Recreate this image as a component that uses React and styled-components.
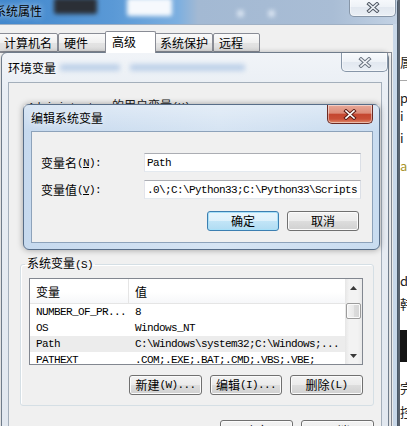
import React from 'react';
import styled, { createGlobalStyle } from 'styled-components';

const CJK = '"Noto Sans CJK SC", "Liberation Sans", sans-serif';
const MONO = '"Liberation Mono", "Noto Sans CJK SC", monospace';

const GlobalStyle = createGlobalStyle`
  * { box-sizing: border-box; }
  html, body { margin: 0; padding: 0; background: #fff; }
  body { font-family: ${CJK}; font-size: 12px; color: #000; }
`;

const Screen = styled.div`
  position: relative;
  width: 407px;
  height: 426px;
  overflow: hidden;
  background: #fff;
`;

/* the page lying behind everything, only a sliver shows on the right */
const BackPage = styled.div`
  position: absolute;
  left: 398px;
  top: 0;
  width: 30px;
  height: 426px;
  display: flex;
  flex-direction: column;
  padding-top: 54px;
  background: #fff;
  border-left: 2px solid #5b6470;
`;

const BackGlyph = styled.span`
  margin-top: ${(p) => p.$gap}px;
  margin-left: 0;
  height: 16px;
  font-size: 13px;
  line-height: 16px;
  color: ${(p) => p.$color || '#222'};
`;

const BackRule = styled.div`
  margin-top: ${(p) => p.$gap}px;
  height: ${(p) => p.$h || 1}px;
  background: ${(p) => p.$color || '#a9a9a9'};
`;

/* ---------- windows ---------- */

const SysWindow = styled.div`
  position: absolute;
  left: -8px;
  top: -5px;
  width: 406px;
  height: 460px;
  display: flex;
  flex-direction: column;
  background: #c9d8e9;
  border: 1px solid #4a5868;
  border-radius: 7px 7px 0 0;
`;

const SysTitleBar = styled.div`
  display: flex;
  align-items: center;
  height: 28px;
  padding: 2px 0 0 1px;
  background: linear-gradient(90deg, #3f86cc 0px, #5a99d6 120px, #7cafe0 185px, #a3b9d3 205px, #a9bdd5 340px, #c3d2e4 100%);
`;

const EnvTitleBar = styled.div`
  display: flex;
  align-items: center;
  height: 29px;
  padding-left: 6px;
`;

const EditTitleBar = styled.div`
  display: flex;
  align-items: center;
  height: 26px;
  padding-left: 7px;
  background: linear-gradient(180deg, rgba(255, 255, 255, 0.35) 0%, rgba(255, 255, 255, 0) 100%);
`;

const TitleText = styled.span`
  font-family: ${CJK};
  font-size: 12px;
  line-height: 16px;
  color: #000;
  white-space: nowrap;
  text-shadow: 0 0 6px rgba(255, 255, 255, 0.9);
`;

const Blob = styled.span`
  align-self: flex-start;
  flex: none;
  margin-left: ${(p) => p.$ml}px;
  margin-top: ${(p) => p.$mt || 0}px;
  width: ${(p) => p.$w}px;
  height: ${(p) => p.$h}px;
  border-radius: 2px;
  background: ${(p) => p.$color};
  opacity: ${(p) => p.$o || 1};
  filter: blur(${(p) => p.$blur || 2}px);
`;

const Spacer = styled.div`
  flex: 1;
`;

const CloseButton = styled.div`
  align-self: flex-start;
  flex: none;
  width: ${(p) => p.$w || 47}px;
  height: 19px;
  margin-right: ${(p) => p.$mr || 0}px;
  display: flex;
  align-items: center;
  justify-content: center;
  border: 1px solid ${(p) => (p.$red ? '#6b2b24' : '#8796a8')};
  border-top: none;
  border-radius: 0 0 5px 5px;
  background: ${(p) =>
    p.$red
      ? 'linear-gradient(180deg, #e8a898 0%, #dc8b78 45%, #c4462f 52%, #c94f37 78%, #e08c6c 100%)'
      : 'linear-gradient(180deg, #f8fafd 0%, #eef2f7 48%, #e2e8f0 52%, #eaeff5 100%)'};
  box-shadow: inset 0 0 0 1px rgba(255, 255, 255, 0.45);
`;

const XGlyph = ({ outline, fill }) => (
  <svg width="14" height="11" viewBox="0 0 14 11">
    <g strokeLinecap="square">
      <path d="M3 2 L11 9 M11 2 L3 9" stroke={outline} strokeWidth="3.6" />
      <path d="M3 2 L11 9 M11 2 L3 9" stroke={fill} strokeWidth="1.6" />
    </g>
  </svg>
);

const SysClient = styled.div`
  flex: 1;
  display: flex;
  flex-direction: column;
  margin: 0 4px 0 3px;
  padding-top: 6px;
  background: #f0f0f0;
  border-top: 1px solid #9fb0c4;
`;

const TabStrip = styled.div`
  display: flex;
  align-items: flex-end;
  height: 21px;
  padding-left: 2px;
`;

const Tab = styled.div`
  position: relative;
  z-index: ${(p) => (p.$active ? 1 : 0)};
  width: ${(p) => p.$w}px;
  height: ${(p) => (p.$active ? 22 : 19)}px;
  margin: 0 ${(p) => (p.$active ? -2 : 0)}px ${(p) => (p.$active ? -1 : 0)}px;
  padding: ${(p) => (p.$active ? '1px 0 0 6px' : '0 0 0 5px')};
  border: 1px solid #898c95;
  border-bottom: ${(p) => (p.$active ? 'none' : '1px solid #898c95')};
  border-radius: 2px 2px 0 0;
  background: ${(p) =>
    p.$active ? '#fff' : 'linear-gradient(180deg, #fafafa 0%, #f0f0f0 50%, #e4e4e4 51%, #dcdcdc 100%)'};
  font-size: 12px;
  line-height: 17px;
  white-space: nowrap;
`;

const TabPanel = styled.div`
  flex: 1;
  margin-right: 1px;
  background: #fcfcfc;
  border: 1px solid #898c95;
`;

const EnvWindow = styled.div`
  position: absolute;
  left: 1px;
  top: 52px;
  width: 388px;
  height: 420px;
  display: flex;
  flex-direction: column;
  border: 1px solid #6f7c8b;
  border-radius: 6px 6px 0 0;
  background: linear-gradient(180deg, #f1f4f8 0%, #e9eef4 40px, #e1e7ef 100%);
  box-shadow: 0 0 5px rgba(0, 0, 0, 0.25);
`;

const EnvClient = styled.div`
  flex: 1;
  display: flex;
  flex-direction: column;
  margin: 0 6px;
  padding: 15px 7px 0 0;
  background: #f0f0f0;
  border: 1px solid #a4afbb;
`;

const GroupCaption = styled.div`
  margin-left: 19px;
  height: 14px;
  font-size: 12px;
  line-height: 14px;
  white-space: nowrap;
  color: #222;
`;

const HiddenGroup = styled.div`
  height: 144px;
`;

const GroupBox = styled.fieldset`
  margin: 0 0 0 11px;
  padding: 6px 10px 10px 8px;
  min-width: 0;
  border: 1px solid #d5dfe5;
  border-radius: 3px;
  box-shadow: inset 1px 1px 0 #fff;
`;

const GroupLegend = styled.legend`
  margin-left: -4px;
  padding: 0 2px;
  font-size: 12px;
  line-height: 14px;
`;

const ListView = styled.div`
  display: flex;
  height: 87px;
  border: 1px solid #828790;
  background: #fff;
`;

const ListMain = styled.div`
  flex: 1;
  display: flex;
  flex-direction: column;
  overflow: hidden;
`;

const HeaderRow = styled.div`
  display: grid;
  grid-template-columns: 99px 1fr;
  height: 25px;
  flex: none;
  border-bottom: 1px solid #e5e5e5;
  background: linear-gradient(180deg, #fff 0%, #fff 55%, #f6f7f9 100%);
`;

const HeaderCell = styled.div`
  display: flex;
  align-items: center;
  padding-left: 6px;
  font-size: 12px;
  border-right: ${(p) => (p.$sep ? '1px solid #e5e5e5' : 'none')};
`;

const Row = styled.div`
  display: grid;
  grid-template-columns: 99px 1fr;
  height: 16px;
  flex: none;
  align-items: center;
  background: ${(p) => (p.$selected ? '#ececec' : 'transparent')};
  font-family: ${MONO};
  font-size: 11px;
  letter-spacing: -0.6px;
  line-height: 16px;
  white-space: nowrap;
`;

const Cell = styled.span`
  padding-left: 6px;
  overflow: hidden;
`;

const ScrollBar = styled.div`
  width: 17px;
  flex: none;
  display: flex;
  flex-direction: column;
  align-items: center;
  background: linear-gradient(90deg, #e6e6e6 0%, #f3f3f3 25%, #f3f3f3 75%, #e9e9e9 100%);
`;

const ArrowBox = styled.div`
  height: 17px;
  width: 17px;
  display: flex;
  align-items: center;
  justify-content: center;
`;

const Thumb = styled.div`
  margin-top: 7px;
  width: 15px;
  height: 16px;
  border: 1px solid #9c9c9c;
  border-radius: 2px;
  background: linear-gradient(90deg, #f4f4f4 0%, #e9e9e9 50%, #dcdcdc 51%, #d6d6d6 100%);
  box-shadow: inset 0 0 0 1px #fbfbfb;
`;

const ButtonRow = styled.div`
  display: flex;
  justify-content: flex-end;
  gap: 8px;
  margin-top: ${(p) => p.$mt || 0}px;
  margin-right: ${(p) => p.$mr || 0}px;
`;

const PushButton = styled.div`
  flex: none;
  width: ${(p) => p.$w || 73}px;
  height: ${(p) => p.$h || 20}px;
  display: flex;
  align-items: center;
  justify-content: center;
  border: 1px solid ${(p) => (p.$default ? '#3c7fb1' : '#707070')};
  border-radius: 3px;
  background: ${(p) =>
    p.$default
      ? 'linear-gradient(180deg, #e8f5fc 0%, #dcf0fb 50%, #c2e5f7 51%, #b0dcf3 100%)'
      : 'linear-gradient(180deg, #f3f3f3 0%, #ebebeb 50%, #dddddd 51%, #d0d0d0 100%)'};
  box-shadow: inset 0 0 0 1px ${(p) => (p.$default ? '#a8e0f8' : '#fbfbfb')};
  font-size: 12px;
  line-height: 14px;
  white-space: nowrap;
`;

const Latin = styled.span`
  font-family: ${MONO};
  font-size: 11px;
  letter-spacing: -0.6px;
`;

const EditDialog = styled.div`
  position: absolute;
  left: 23px;
  top: 104px;
  width: 357px;
  height: 146px;
  display: flex;
  flex-direction: column;
  border: 1px solid #576d88;
  border-radius: 6px;
  background: linear-gradient(90deg, #c6d9ee 0%, #d6e4f3 55%, #c9dcf0 100%);
  box-shadow: 0 0 6px rgba(0, 0, 0, 0.35);
`;

const EditClient = styled.div`
  flex: 1;
  margin: 0 6px 6px 7px;
  padding: 21px 11px 0 9px;
  background: #f0f0f0;
  border: 1px solid #8da2ba;
`;

const FieldGrid = styled.div`
  display: grid;
  grid-template-columns: 103px 1fr;
  grid-auto-rows: 19px;
  row-gap: 8px;
`;

const FieldLabel = styled.div`
  display: flex;
  align-items: center;
  font-size: 12px;
  white-space: nowrap;
`;

const TextBox = styled.div`
  display: flex;
  align-items: center;
  padding-left: 2px;
  overflow: hidden;
  background: #fff;
  border: 1px solid;
  border-color: #abadb3 #dbdfe6 #e3e9ef #e2e3ea;
  font-family: ${MONO};
  font-size: 11px;
  letter-spacing: -0.6px;
  white-space: nowrap;
`;

const Accel = ({ cjk, k, tail = '', underline }) => (
  <>
    {cjk}
    <Latin>
      ({underline ? <u>{k}</u> : k}){tail}
    </Latin>
  </>
);

const tabs = [
  { label: '计算机名', w: 60 },
  { label: '硬件', w: 49 },
  { label: '高级', w: 51, active: true },
  { label: '系统保护', w: 59 },
  { label: '远程', w: 47 },
];

const sysVars = [
  { name: 'NUMBER_OF_PR...', value: '8' },
  { name: 'OS', value: 'Windows_NT' },
  { name: 'Path', value: 'C:\\Windows\\system32;C:\\Windows;...', selected: true },
  { name: 'PATHEXT', value: '.COM;.EXE;.BAT;.CMD;.VBS;.VBE;' },
];

const Arrow = ({ down }) => (
  <svg width="7" height="4" viewBox="0 0 7 4">
    <path d={down ? 'M0 0 H7 L3.5 4 Z' : 'M0 4 H7 L3.5 0 Z'} fill="#3a3a3a" />
  </svg>
);

export default function App() {
  return (
    <>
      <GlobalStyle />
      <Screen>
        <BackPage>
          <BackGlyph $gap={0}>属</BackGlyph>
          <BackRule $gap={10} />
          <BackGlyph $gap={9}>p</BackGlyph>
          <BackGlyph $gap={2}>i</BackGlyph>
          <BackGlyph $gap={6}>i</BackGlyph>
          <BackGlyph $gap={12} $color="#a8952c">a</BackGlyph>
          <BackGlyph $gap={99}>d</BackGlyph>
          <BackGlyph $gap={7}>韩</BackGlyph>
          <BackRule $gap={18} $h={32} $color="#151515" />
          <BackGlyph $gap={18}>完</BackGlyph>
          <BackGlyph $gap={8}>控</BackGlyph>
        </BackPage>

        <SysWindow>
          <SysTitleBar>
            <TitleText>系统属性</TitleText>
            <Blob $ml={12} $w={43} $h={16} $color="#2b2f36" />
            <Blob $ml={30} $w={45} $h={18} $color="#f6f9fd" />
            <Blob $ml={65} $mt={12} $w={7} $h={7} $color="#e3ecf7" $o={0.8} />
            <Blob $ml={24} $mt={12} $w={7} $h={7} $color="#e3ecf7" $o={0.8} />
            <Spacer />
            <CloseButton $mr={1}>
              <XGlyph outline="#4e5662" fill="#eef2f7" />
            </CloseButton>
          </SysTitleBar>
          <SysClient>
            <TabStrip>
              {tabs.map((t) => (
                <Tab key={t.label} $w={t.w} $active={t.active}>
                  {t.label}
                </Tab>
              ))}
            </TabStrip>
            <TabPanel />
          </SysClient>
        </SysWindow>

        <EnvWindow>
          <EnvTitleBar>
            <TitleText>环境变量</TitleText>
            <Blob $ml={4} $mt={11} $w={60} $h={7} $color="#a9c3e3" $o={0.7} $blur={2.5} />
            <Blob $ml={10} $mt={11} $w={115} $h={7} $color="#a9c3e3" $o={0.7} $blur={2.5} />
            <Spacer />
            <CloseButton $mr={0}>
              <XGlyph outline="#6b7480" fill="#f3f5f8" />
            </CloseButton>
          </EnvTitleBar>
          <EnvClient>
            <GroupCaption>
              <Latin>Administrator </Latin>
              <Accel cjk="的用户变量" k="U" />
            </GroupCaption>
            <HiddenGroup />
            <GroupBox>
              <GroupLegend>
                <Accel cjk="系统变量" k="S" />
              </GroupLegend>
              <ListView>
                <ListMain>
                  <HeaderRow>
                    <HeaderCell $sep>变量</HeaderCell>
                    <HeaderCell>值</HeaderCell>
                  </HeaderRow>
                  {sysVars.map((v) => (
                    <Row key={v.name} $selected={v.selected}>
                      <Cell>{v.name}</Cell>
                      <Cell>{v.value}</Cell>
                    </Row>
                  ))}
                </ListMain>
                <ScrollBar>
                  <ArrowBox>
                    <Arrow />
                  </ArrowBox>
                  <Thumb />
                  <Spacer />
                  <ArrowBox>
                    <Arrow down />
                  </ArrowBox>
                </ScrollBar>
              </ListView>
              <ButtonRow $mt={10}>
                <PushButton>
                  <Accel cjk="新建" k="W" tail="..." />
                </PushButton>
                <PushButton $w={72}>
                  <Accel cjk="编辑" k="I" tail="..." />
                </PushButton>
                <PushButton>
                  <Accel cjk="删除" k="L" />
                </PushButton>
              </ButtonRow>
            </GroupBox>
            <ButtonRow $mt={14}>
              <PushButton $h={22}>确定</PushButton>
              <PushButton $h={22}>取消</PushButton>
            </ButtonRow>
          </EnvClient>
        </EnvWindow>

        <EditDialog>
          <EditTitleBar>
            <TitleText>编辑系统变量</TitleText>
            <Spacer />
            <CloseButton $red $w={46} $mr={6}>
              <XGlyph outline="#5a1d16" fill="#ffffff" />
            </CloseButton>
          </EditTitleBar>
          <EditClient>
            <FieldGrid>
              <FieldLabel>
                <Accel cjk="变量名" k="N" tail=":" underline />
              </FieldLabel>
              <TextBox>Path</TextBox>
              <FieldLabel>
                <Accel cjk="变量值" k="V" tail=":" underline />
              </FieldLabel>
              <TextBox>.0\;C:\Python33;C:\Python33\Scripts</TextBox>
            </FieldGrid>
            <ButtonRow $mt={12} $mr={2}>
              <PushButton $w={72} $default>
                确定
              </PushButton>
              <PushButton $w={72}>取消</PushButton>
            </ButtonRow>
          </EditClient>
        </EditDialog>
      </Screen>
    </>
  );
}
